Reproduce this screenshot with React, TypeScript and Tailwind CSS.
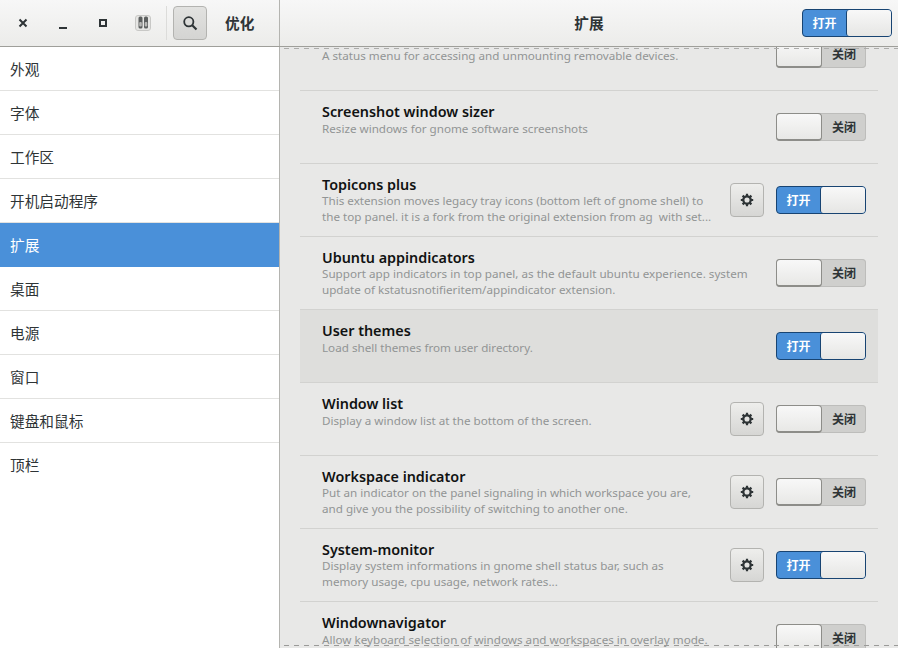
const cjk = '"Noto Sans", "Noto Sans CJK SC", sans-serif'

const categories = ['外观', '字体', '工作区', '开机启动程序', '扩展', '桌面', '电源', '窗口', '键盘和鼠标', '顶栏']

type Ext = { title: string; lines: string[]; on: boolean; gear?: boolean; hover?: boolean }

const extensions: Ext[] = [
  // scrolled past the top edge, only the description shows
  { title: '', lines: ['A status menu for accessing and unmounting removable devices.'], on: false },
  { title: 'Screenshot window sizer', lines: ['Resize windows for gnome software screenshots'], on: false },
  {
    title: 'Topicons plus',
    lines: [
      'This extension moves legacy tray icons (bottom left of gnome shell) to',
      'the top panel. it is a fork from the original extension from ag  with set...',
    ],
    on: true,
    gear: true,
  },
  {
    title: 'Ubuntu appindicators',
    lines: [
      'Support app indicators in top panel, as the default ubuntu experience. system',
      'update of kstatusnotifieritem/appindicator extension.',
    ],
    on: false,
  },
  { title: 'User themes', lines: ['Load shell themes from user directory.'], on: true, hover: true },
  { title: 'Window list', lines: ['Display a window list at the bottom of the screen.'], on: false, gear: true },
  {
    title: 'Workspace indicator',
    lines: ['Put an indicator on the panel signaling in which workspace you are,', 'and give you the possibility of switching to another one.'],
    on: false,
    gear: true,
  },
  {
    title: 'System-monitor',
    lines: ['Display system informations in gnome shell status bar, such as', 'memory usage, cpu usage, network rates...'],
    on: true,
    gear: true,
  },
  { title: 'Windownavigator', lines: ['Allow keyboard selection of windows and workspaces in overlay mode.'], on: false },
]

function Gear() {
  return (
    <svg width="14" height="14" viewBox="0 0 14 14" fill="none" stroke="#2e3436">
      <circle cx="7" cy="7" r="3.7" strokeWidth="2.3" />
      <path d="M7 .8v2.4M7 10.8v2.4M.8 7h2.4M10.8 7h2.4M2.6 2.6l1.7 1.7M9.7 9.7l1.7 1.7M11.4 2.6l-1.7 1.7M4.3 9.7l-1.7 1.7" strokeWidth="2.2" />
    </svg>
  )
}

function Toggle({ on }: { on: boolean }) {
  if (on) {
    return (
      <div className="flex h-[28px] w-[90px] shrink-0 rounded-[4px] border border-[#184472] bg-[#4a90d9]">
        <span className="flex w-[43px] items-center justify-center pt-[1px] text-[12px] font-bold text-white">打开</span>
        <span className="flex-1 rounded-[3px] border-l border-[#184472] bg-gradient-to-b from-[#f8f8f8] to-[#e6e6e4]" />
      </div>
    )
  }
  return (
    <div className="flex h-[28px] w-[90px] shrink-0 rounded-[4px] bg-[#cfcfcd] shadow-[inset_0_0_0_1px_#bdbdbb]">
      <span className="w-[46px] rounded-[4px] border border-b-2 border-[#8d8d89] bg-gradient-to-b from-[#f8f8f8] to-[#e8e8e6]" />
      <span className="flex flex-1 items-center justify-center pt-[1px] text-[12px] font-bold text-[#2e3436]">关闭</span>
    </div>
  )
}

function ExtensionRow({ ext }: { ext: Ext }) {
  return (
    <div className={`flex h-[73px] shrink-0 items-center border-b border-[#d2d2d0] pl-[22px] pr-[12px] ${ext.hover ? 'bg-[#dededc]' : ''}`}>
      <div className="flex h-full flex-1 flex-col pt-[11px]">
        <div className="h-[19px] text-[14.35px] font-semibold leading-[19px] text-[#101212]">{ext.title}</div>
        <div className={ext.lines.length > 1 ? 'mt-[-1px]' : ''}>
          {ext.lines.map((line) => (
            <div key={line} className="whitespace-pre text-[11.67px] leading-[16px] text-[#929595]">
              {line}
            </div>
          ))}
        </div>
      </div>
      {ext.gear && (
        <button type="button" className="mr-[12px] flex h-[34px] w-[34px] items-center justify-center rounded-[4px] border border-[#b3b3b0] bg-gradient-to-b from-[#eeeeec] to-[#d6d6d4]">
          <Gear />
        </button>
      )}
      <Toggle on={ext.on} />
    </div>
  )
}

export default function App() {
  return (
    <div className="relative flex h-[648px] w-[898px] flex-col overflow-hidden bg-white" style={{ fontFamily: cjk }}>
      <header className="flex h-[47px] shrink-0 border-b border-[#9f9f9a] bg-gradient-to-b from-[#f7f7f7] to-[#ececea]">
        <div className="flex w-[280px] shrink-0 items-center border-r border-[#b4b4b0] text-[#2e3436]">
          <span className="flex w-[46px] justify-center">
            <svg width="10" height="10" viewBox="0 0 10 10">
              <path d="M1.5 1.5l7 7M8.5 1.5l-7 7" stroke="#2e3436" strokeWidth="2" />
            </svg>
          </span>
          <span className="flex w-[34px] justify-center pt-[10px]">
            <span className="h-[2px] w-[8px] bg-[#2e3436]" />
          </span>
          <span className="flex w-[46px] justify-center">
            <span className="h-[8px] w-[8px] border-2 border-[#2e3436]" />
          </span>
          <span className="flex w-[34px] justify-center">
            <svg width="16" height="16" viewBox="0 0 16 16">
              <rect x="0.5" y="0.5" width="15" height="15" rx="2.5" fill="#e6e6e4" stroke="#c8c8c6" />
              <rect x="3.5" y="1.5" width="4" height="12" rx="1.5" fill="#5c5f5f" />
              <rect x="9" y="1.5" width="4" height="12" rx="1.5" fill="#5c5f5f" />
              <rect x="4.2" y="7" width="2.6" height="4.5" rx="1" fill="#b8b8b6" />
              <rect x="9.7" y="7" width="2.6" height="4.5" rx="1" fill="#b8b8b6" />
            </svg>
          </span>
          <span className="ml-[6px] h-[34px] w-px bg-[#dcdcda]" />
          <button type="button" className="ml-[6px] flex h-[34px] w-[34px] items-center justify-center rounded-[4px] border border-[#b3b3b0] bg-gradient-to-b from-[#e2e2e0] to-[#d4d4d2]">
            <svg width="16" height="16" viewBox="0 0 16 16" fill="none">
              <circle cx="6.8" cy="6.8" r="4.6" stroke="#2e3436" strokeWidth="1.8" />
              <path d="M10.2 10.2l4.3 4.3" stroke="#2e3436" strokeWidth="2.2" />
            </svg>
          </button>
          <span className="ml-[18px] text-[14.67px] font-bold">优化</span>
        </div>
        <div className="relative flex flex-1 items-center justify-center">
          <span className="text-[14.67px] font-bold text-[#2e3436]">扩展</span>
          <div className="absolute right-[6px] top-[9px]">
            <Toggle on />
          </div>
        </div>
      </header>

      <div className="flex min-h-0 flex-1">
        <nav className="w-[280px] shrink-0 border-r border-[#b4b4b0] bg-white">
          {categories.map((name, i) => (
            <div
              key={name}
              className={`flex h-[44px] items-center pl-[10px] text-[14.67px] ${i < categories.length - 1 ? 'border-b' : ''} ${
                name === '扩展' ? 'border-[#4a90d9] bg-[#4a90d9] text-white' : 'border-[#e2e2e0] text-[#2e3436]'
              }`}
            >
              {name}
            </div>
          ))}
        </nav>

        <main className="relative min-w-0 flex-1 overflow-hidden bg-[#e8e8e7] pl-[20px] pr-[20px]">
          <div className="mt-[-29px] flex flex-col">
            {extensions.map((ext) => (
              <ExtensionRow key={ext.title || 'scrolled'} ext={ext} />
            ))}
          </div>
          <div className="absolute left-[4px] right-0 top-[1px] h-px bg-[repeating-linear-gradient(90deg,#acacaa_0,#acacaa_5px,transparent_5px,transparent_10px)]" />
          <div className="absolute left-[4px] right-0 bottom-[2px] h-px bg-[repeating-linear-gradient(90deg,#9a9a98_0,#9a9a98_5px,transparent_5px,transparent_10px)]" />
        </main>
      </div>
    </div>
  )
}
